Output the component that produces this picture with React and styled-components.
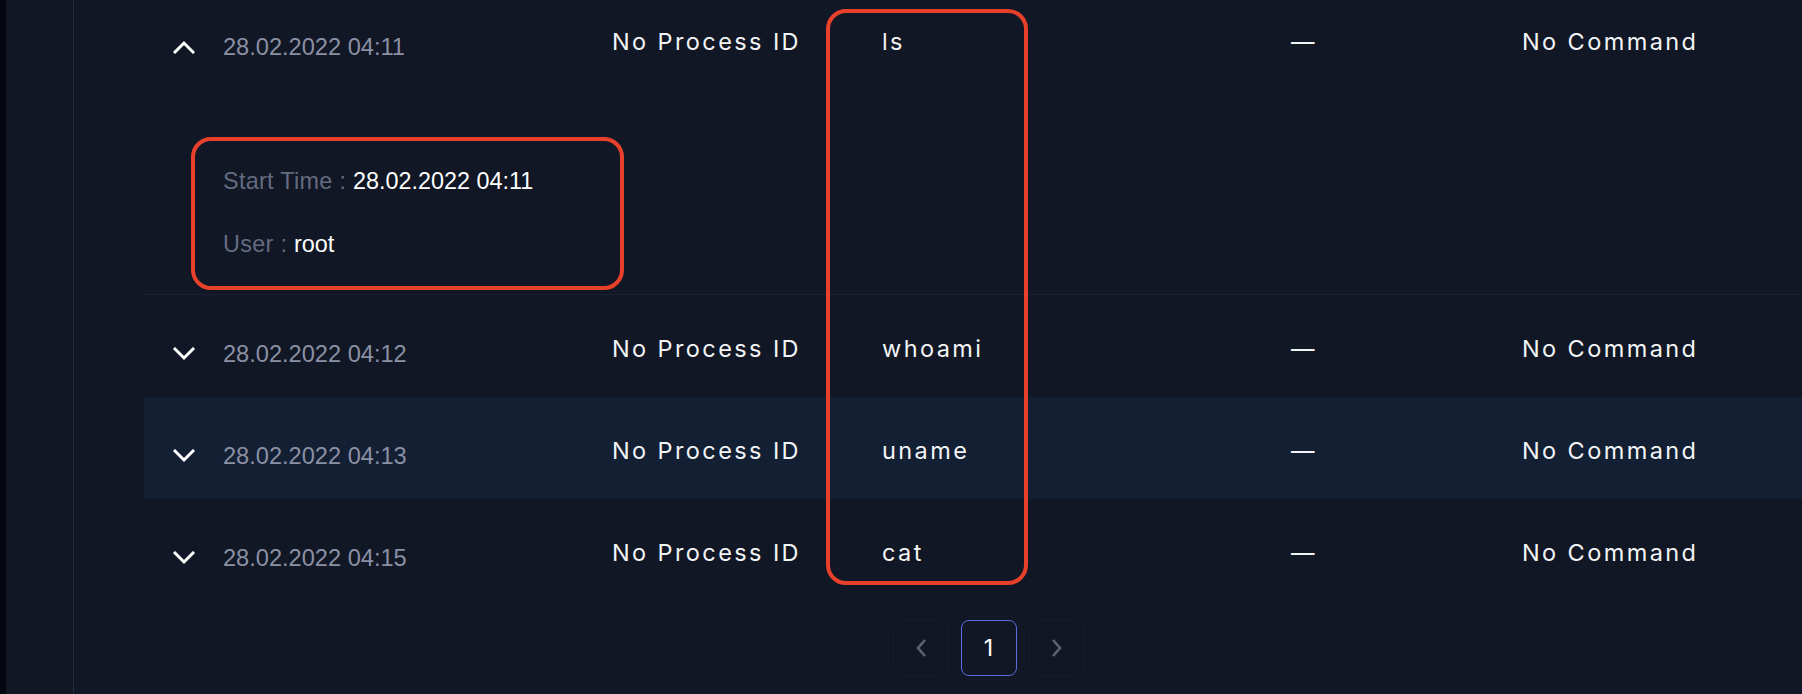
import React from 'react'
import styled, { createGlobalStyle } from 'styled-components'

const GlobalStyle = createGlobalStyle`
  * { box-sizing: border-box; }
  body {
    margin: 0;
    background: #111724;
    font-family: "Liberation Sans", Arial, sans-serif;
  }
`

const rows = [
  { time: '28.02.2022 04:11', command: 'ls', open: true, user: 'root' },
  { time: '28.02.2022 04:12', command: 'whoami' },
  { time: '28.02.2022 04:13', command: 'uname', highlight: true },
  { time: '28.02.2022 04:15', command: 'cat' },
]

const Chevron = ({ up }) => (
  <svg width="22" height="14" viewBox="0 0 22 14" fill="none">
    <polyline
      points={up ? '2,12 11,3 20,12' : '2,2 11,11 20,2'}
      stroke="#fff"
      strokeWidth="3"
      strokeLinecap="square"
    />
  </svg>
)

const PageArrow = ({ left }) => (
  <svg width="12" height="20" viewBox="0 0 12 20" fill="none">
    <polyline
      points={left ? '10,2 3,10 10,18' : '2,2 9,10 2,18'}
      stroke="#5e636e"
      strokeWidth="2.6"
    />
  </svg>
)

const App = () => {
  return (
    <>
      <GlobalStyle />
      <Page>
        <Sidebar>
          <Edge />
        </Sidebar>
        <Main>
          <Table>
            {rows.map((item) => (
              <React.Fragment key={item.time}>
                <Row $highlight={item.highlight} $open={item.open}>
                  <Toggle>
                    <Chevron up={item.open} />
                  </Toggle>
                  <Time>{item.time}</Time>
                  <Cell>No Process ID</Cell>
                  <Cell>{item.command}</Cell>
                  <Cell>—</Cell>
                  <Cell>No Command</Cell>
                </Row>
                {item.open && (
                  <Details>
                    <Line>
                      <Label>Start Time : </Label>
                      <Value>{item.time}</Value>
                    </Line>
                    <Line>
                      <Label>User : </Label>
                      <Value>{item.user}</Value>
                    </Line>
                  </Details>
                )}
              </React.Fragment>
            ))}
          </Table>
          <Pagination>
            <PageButton>
              <PageArrow left />
            </PageButton>
            <PageButton $active>1</PageButton>
            <PageButton>
              <PageArrow />
            </PageButton>
          </Pagination>
        </Main>
        <Mark $left={191} $top={137} $width={433} $height={153} />
        <Mark $left={826} $top={9} $width={202} $height={576} />
      </Page>
    </>
  )
}

export default App

const Page = styled.div`
  position: relative;
  display: flex;
  width: 100%;
  height: 694px;
  overflow: hidden;
  background: #111724;
`
const Sidebar = styled.aside`
  width: 74px;
  flex-shrink: 0;
  display: flex;
  border-right: 1px solid #1f2a3d;
  background: #111723;
`
const Edge = styled.div`
  width: 6px;
  background: #05070f;
`
const Main = styled.main`
  flex: 1;
  display: flex;
  flex-direction: column;
  padding-left: 70px;
`
const Table = styled.div`
  margin-top: -10px;
`
const Row = styled.div`
  display: grid;
  grid-template-columns: 50px 389px 270px 409px 231px 1fr;
  align-items: center;
  height: 102px;
  padding-left: 29px;
  padding-top: ${(p) => (p.$open ? 0 : 4)}px;
  background: ${(p) => (p.$highlight ? '#131f33' : 'transparent')};
`
const Toggle = styled.div`
  display: flex;
  margin-top: 12px;
`
const Time = styled.div`
  margin-top: 12px;
  font-family: "Liberation Sans", Arial, sans-serif;
  font-size: 23.6px;
  color: #8b90a4;
`
const Cell = styled.div`
  font-family: Inter, "Noto Sans", sans-serif;
  font-size: 23.5px;
  letter-spacing: 2.4px;
  color: #f3f4f6;
`
const Details = styled.div`
  display: flex;
  flex-direction: column;
  gap: 33px;
  padding: 74px 0 35px 79px;
  border-bottom: 1px solid #1b2035;
`
const Line = styled.div`
  line-height: 30px;
  font-size: 23.4px;
`
const Label = styled.span`
  color: #646b80;
  letter-spacing: 0.3px;
`
const Value = styled.span`
  color: #ffffff;
`
const Pagination = styled.nav`
  display: flex;
  justify-content: center;
  gap: 12px;
  margin-top: 19px;
  padding-left: 31px;
`
const PageButton = styled.div`
  width: 56px;
  height: 56px;
  display: flex;
  align-items: center;
  justify-content: center;
  border-radius: 8px;
  border: 1.5px solid ${(p) => (p.$active ? '#5b6de0' : '#161c29')};
  font-family: Inter, "Noto Sans", sans-serif;
  font-size: 23px;
  color: #ffffff;
`
const Mark = styled.div`
  position: absolute;
  left: ${(p) => p.$left}px;
  top: ${(p) => p.$top}px;
  width: ${(p) => p.$width}px;
  height: ${(p) => p.$height}px;
  border: 4.5px solid #e8412b;
  border-radius: 20px;
  pointer-events: none;
`
